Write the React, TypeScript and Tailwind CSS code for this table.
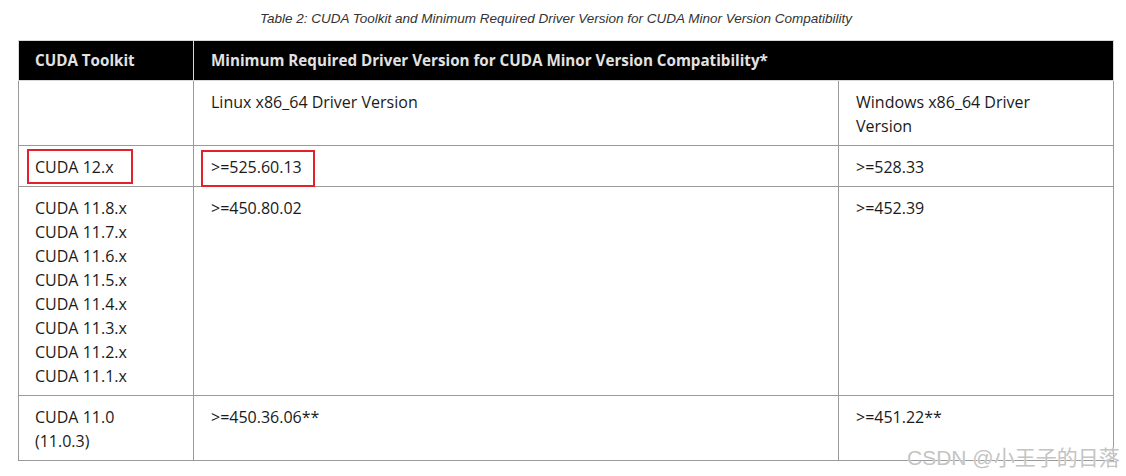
export default function App() {
  const older = ["11.8", "11.7", "11.6", "11.5", "11.4", "11.3", "11.2", "11.1"]
  const cell = "border border-[#9a9a9a] align-top pt-[9px] pb-[7px] leading-[24px]"

  return (
    <div className="relative w-[1126px] h-[476px] bg-white overflow-hidden" style={{ fontFamily: "'Open Sans', 'Liberation Sans', sans-serif" }}>
      {/* Caption */}
      <p className="pt-[9px] pr-[14px] h-[40px] text-center text-[13.5px] italic text-[#333]" style={{ fontFamily: "'Liberation Sans', Arial, sans-serif" }}>
        Table 2: CUDA Toolkit and Minimum Required Driver Version for CUDA Minor Version Compatibility
      </p>

      <table className="ml-[18px] w-[1095px] border-collapse text-[16px] text-[#1a1a1a] table-fixed">
        <colgroup>
          <col className="w-[175px]" />
          <col className="w-[645px]" />
          <col className="w-[275px]" />
        </colgroup>
        <thead>
          <tr className="h-[40px] bg-black text-[#e2e2e2] text-[15.2px] font-bold text-left">
            <th className="border border-[#d8d8d8] pl-[16px] font-bold">CUDA Toolkit</th>
            <th colSpan={2} className="border border-[#d8d8d8] pl-[17px] font-bold">
              Minimum Required Driver Version for CUDA Minor Version Compatibility*
            </th>
          </tr>
        </thead>
        <tbody>
          <tr>
            <td className={`${cell} h-[65px] pl-[16px]`}></td>
            <td className={`${cell} pl-[17px]`}>Linux x86_64 Driver Version</td>
            <td className={`${cell} pl-[17px] pr-[30px]`}>Windows x86_64 Driver Version</td>
          </tr>
          <tr>
            <td className={`${cell} pl-[16px] relative`}>
              <span className="absolute left-[8px] top-[3px] w-[106px] h-[35px] border-2 border-[#e4202c]" />
              CUDA 12.x
            </td>
            <td className={`${cell} pl-[17px] relative`}>
              <span className="absolute left-[7px] top-[4px] w-[114px] h-[37px] border-2 border-[#e4202c]" />
              &gt;=525.60.13
            </td>
            <td className={`${cell} pl-[17px]`}>&gt;=528.33</td>
          </tr>
          <tr>
            <td className={`${cell} pl-[16px]`}>
              {older.map((v) => (
                <div key={v}>CUDA {v}.x</div>
              ))}
            </td>
            <td className={`${cell} pl-[17px]`}>&gt;=450.80.02</td>
            <td className={`${cell} pl-[17px]`}>&gt;=452.39</td>
          </tr>
          <tr>
            <td className={`${cell} pl-[16px]`}>
              CUDA 11.0
              <br />
              (11.0.3)
            </td>
            <td className={`${cell} pl-[17px]`}>&gt;=450.36.06**</td>
            <td className={`${cell} pl-[17px]`}>&gt;=451.22**</td>
          </tr>
        </tbody>
      </table>

      {/* Watermark */}
      <span
        className="absolute left-[907px] top-[442px] text-[21px] text-[#c4c4c4] whitespace-nowrap"
        style={{ fontFamily: "'Liberation Sans', 'Noto Sans CJK SC', sans-serif", textShadow: "0 0 1px #fff" }}
      >
        CSDN @小王子的日落
      </span>
    </div>
  )
}
